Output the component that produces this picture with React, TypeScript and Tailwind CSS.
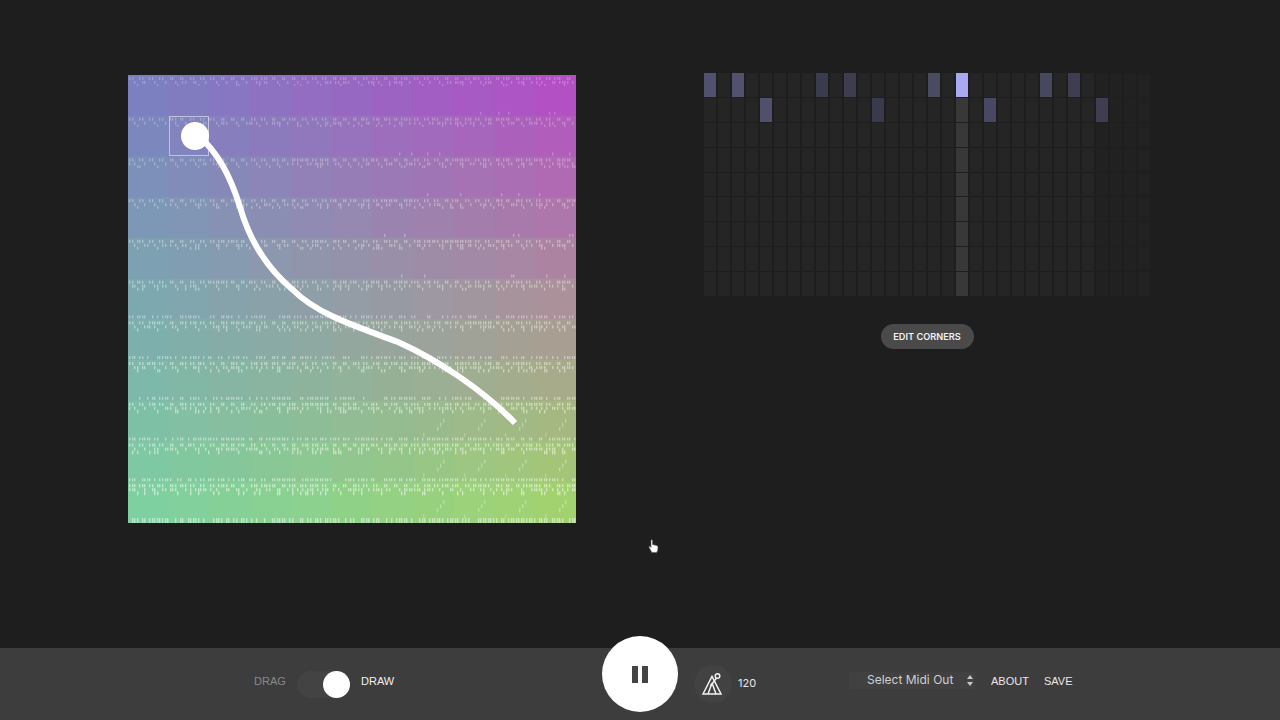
const TILES = 11
const TILE = 448 / TILES

type RGB = [number, number, number]

const corners: { tl: RGB; tr: RGB; bl: RGB; br: RGB } = {
  tl: [124, 128, 192],
  tr: [178, 80, 196],
  bl: [126, 208, 160],
  br: [162, 210, 112],
}

function tileColor(c: number, r: number): RGB {
  const u = c / (TILES - 1)
  const v = r / (TILES - 1)
  return [0, 1, 2].map((i) => {
    const top = corners.tl[i] * (1 - u) + corners.tr[i] * u
    const bottom = corners.bl[i] * (1 - u) + corners.br[i] * u
    return Math.round(top * (1 - v) + bottom * v)
  }) as RGB
}

function rand(a: number, b: number) {
  const x = Math.sin(a * 127.1 + b * 311.7) * 43758.5453
  return x - Math.floor(x)
}

type Tick = { x: number; y: number; h: number; fill: string; o: number }

function buildTicks() {
  const ticks: Tick[] = []
  for (let r = 0; r < TILES; r++) {
    const v = r / (TILES - 1)
    const top = 2 + r * TILE
    for (let c = 0; c < TILES; c++) {
      const u = c / (TILES - 1)
      const col = tileColor(c, r)
      const fill = `rgb(${col.map((n) => Math.min(255, Math.round(n + (255 - n) * 0.55))).join(',')})`
      const o = 0.4 + v * 0.55
      const dense = 0.06 + u * 0.3 + v * 0.35
      for (let s = 0; s < 16; s++) {
        const x = Math.round(c * TILE + s * 2.54 + 1)
        // main band
        if (s % 4 < 2 || rand(r + c * 16, s) < dense * 0.6) ticks.push({ x, y: top, h: 3, fill, o })
        if (s % 4 === 2 || rand(r * 3 + c, s + 40) < dense * 0.7) ticks.push({ x, y: top + 4, h: 3, fill, o })
        if (s % 8 === 3 || rand(c * 5 + r, s + 70) < dense * 0.25) ticks.push({ x, y: top + 7, h: 2 + v * 2, fill, o })
        // upper dots, thin at the top right, full near the bottom
        const upper = v > 0.55 ? 0.35 + v * 0.4 : u > 0.5 && rand(r + c, s + 90) < 0.5 ? u * 0.22 : 0
        if (r > 0 && rand(c + r * 11, s + 120) < upper) ticks.push({ x, y: top - 6, h: 3, fill, o: o * 0.85 })
      }
      // rising little runs in the lower right
      if (c >= 7 && r >= 8) {
        for (let s = 0; s < 3; s++) {
          ticks.push({ x: Math.round(c * TILE + 24 + s * 3), y: top + 24 - s * 4, h: 4, fill, o: 0.55 })
        }
        ticks.push({ x: Math.round(c * TILE + 10), y: top + 30, h: 4, fill, o: 0.4 })
      }
    }
  }
  // last line along the bottom edge
  for (let c = 0; c < TILES; c++) {
    const col = tileColor(c, 10)
    const fill = `rgb(${col.map((n) => Math.round(n + (255 - n) * 0.5)).join(',')})`
    for (let s = 0; s < 16; s++) {
      if (rand(c, s + 200) < 0.75) ticks.push({ x: Math.round(c * TILE + s * 2.54 + 1), y: 443, h: 5, fill, o: 0.9 })
    }
  }
  return ticks
}

const ticks = buildTicks()

const activeCells: Record<string, string> = {
  '0-0': '#51516f',
  '0-2': '#52526f',
  '0-8': '#3b3b4e',
  '0-10': '#3d3d4e',
  '0-16': '#4a4a60',
  '0-18': '#a9a9f2',
  '0-24': '#47475e',
  '0-26': '#3e3e50',
  '1-4': '#50506c',
  '1-12': '#3a3a4d',
  '1-20': '#484864',
  '1-28': '#3e3e50',
}

function PatternGrid() {
  const cells = []
  for (let r = 0; r < 9; r++) {
    for (let c = 0; c < 32; c++) {
      const on = activeCells[`${r}-${c}`]
      const color = on ?? (c === 18 ? '#383838' : c > 27 ? '#212121' : '#252525')
      cells.push(<div key={`${r}-${c}`} style={{ background: color }} />)
    }
  }
  return <div className="grid grid-cols-[repeat(32,12px)] grid-rows-[repeat(9,1fr)] gap-x-[2px] gap-y-[1px] h-[223px] w-[446px]">{cells}</div>
}

function MorphCanvas() {
  const tiles = []
  for (let r = 0; r < TILES; r++) {
    for (let c = 0; c < TILES; c++) {
      tiles.push(
        <rect
          key={`${r}-${c}`}
          x={c * TILE}
          y={r * TILE}
          width={TILE + 1}
          height={TILE + 1}
          fill={`rgb(${tileColor(c, r).join(',')})`}
        />
      )
    }
  }
  return (
    <div className="relative w-[448px] h-[448px] shrink-0 overflow-hidden">
      <svg width="448" height="448" className="block">
        <g>{tiles}</g>
        <g>
          {ticks.map((t, i) => (
            <rect key={i} x={t.x} y={t.y} width="1.4" height={t.h} fill={t.fill} opacity={t.o} />
          ))}
        </g>
        <path
          d="M70 60 C 90 78, 102 100, 112 132 C 120 160, 135 190, 165 215 C 190 240, 230 252, 270 267 C 310 285, 355 315, 387 348"
          fill="none"
          stroke="#fff"
          strokeWidth="6"
        />
      </svg>
      {/* selection square and the drag handle */}
      <div className="absolute left-[41px] top-[41px] w-[40px] h-[40px] border border-white/50" />
      <div className="absolute left-[53px] top-[47px] w-[28px] h-[28px] rounded-full bg-white" />
    </div>
  )
}

function MetronomeIcon() {
  return (
    <svg width="24" height="24" viewBox="0 0 24 24" fill="none" stroke="#f2f2f2" strokeWidth="1.5">
      <path d="M2 22 L11 4.5 L20 22 Z" />
      <path d="M9.5 14 L15.5 6" />
      <path d="M11 11 L15 22" />
      <path d="M11 11 L7 22" />
      <circle cx="16.5" cy="4" r="2.3" />
    </svg>
  )
}

export default function App() {
  return (
    <div className="relative w-[1280px] h-[720px] overflow-hidden flex flex-col bg-[#1e1e1e] font-['Liberation_Sans',sans-serif]">
      <div className="flex-1 flex items-start pl-[128px]">
        <div className="mt-[75px]">
          <MorphCanvas />
        </div>
        <div className="ml-[128px] mt-[73px] flex flex-col items-center">
          <PatternGrid />
          <button className="mt-[28px] h-[25px] w-[93px] rounded-full bg-[#4a4a4a] text-[#f2f2f2] text-[9.2px] font-['Inter',sans-serif] font-semibold">
            EDIT CORNERS
          </button>
        </div>
      </div>

      {/* bottom bar */}
      <div className="h-[72px] shrink-0 bg-[#3d3d3d] flex items-center pl-[254px]">
        <span className="w-[31px] mb-[6px] text-[11px] text-[#8a8a8a]">DRAG</span>
        <div className="ml-[12px] relative w-[53px] h-[27px] rounded-full bg-[#434343]">
          <div className="absolute right-0 top-0 w-[27px] h-[27px] rounded-full bg-white" />
        </div>
        <span className="ml-[11px] w-[33px] mb-[6px] text-[11px] text-[#f0f0f0]">DRAW</span>
        <button className="ml-[208px] w-[76px] h-[76px] mb-[20px] shrink-0 rounded-full bg-white flex items-center justify-center gap-[4px]">
          <span className="w-[6px] h-[17px] bg-[#444444]" />
          <span className="w-[6px] h-[17px] bg-[#444444]" />
        </button>
        <div className="ml-[16px] w-[38px] h-[38px] shrink-0 rounded-full bg-[#424242] flex items-center justify-center">
          <MetronomeIcon />
        </div>
        <span className="ml-[6px] w-[18px] mb-[2px] text-[11px] text-[#e8e8e8] font-['Inter',sans-serif]">120</span>
        <div className="ml-[93px] mb-[8px] w-[126px] h-[17px] shrink-0 bg-[#414141] flex items-center pl-[18px] relative">
          <span className="text-[12px] text-[#cfcfcf] font-['Inter',sans-serif] whitespace-nowrap">Select Midi Out</span>
          <svg width="6" height="11" viewBox="0 0 6 11" className="absolute left-[118px] top-[3px]" fill="#c8c8c8">
            <path d="M3 0 L6 4 L0 4 Z" />
            <path d="M0 7 L6 7 L3 11 Z" />
          </svg>
        </div>
        <span className="ml-[16px] w-[37px] mb-[6px] text-[11px] text-[#e8e8e8]">ABOUT</span>
        <span className="ml-[16px] mb-[6px] text-[11px] text-[#e8e8e8]">SAVE</span>
      </div>

      {/* mouse pointer caught in the capture */}
      <svg className="absolute left-[648px] top-[539px]" width="11" height="14" viewBox="0 0 11 14">
        <path
          d="M3 1 C3.8 .5 4.6 1 4.6 2 L4.6 5.5 L8.5 6.5 C9.6 6.8 10 7.4 10 8.5 L9.6 11.5 L8.8 13.4 L3.8 13.4 L1 8.2 C.8 7.4 1.6 7 2.2 7.5 L3 8.5 Z"
          fill="#fff"
          stroke="#555"
          strokeWidth=".6"
        />
      </svg>
    </div>
  )
}
